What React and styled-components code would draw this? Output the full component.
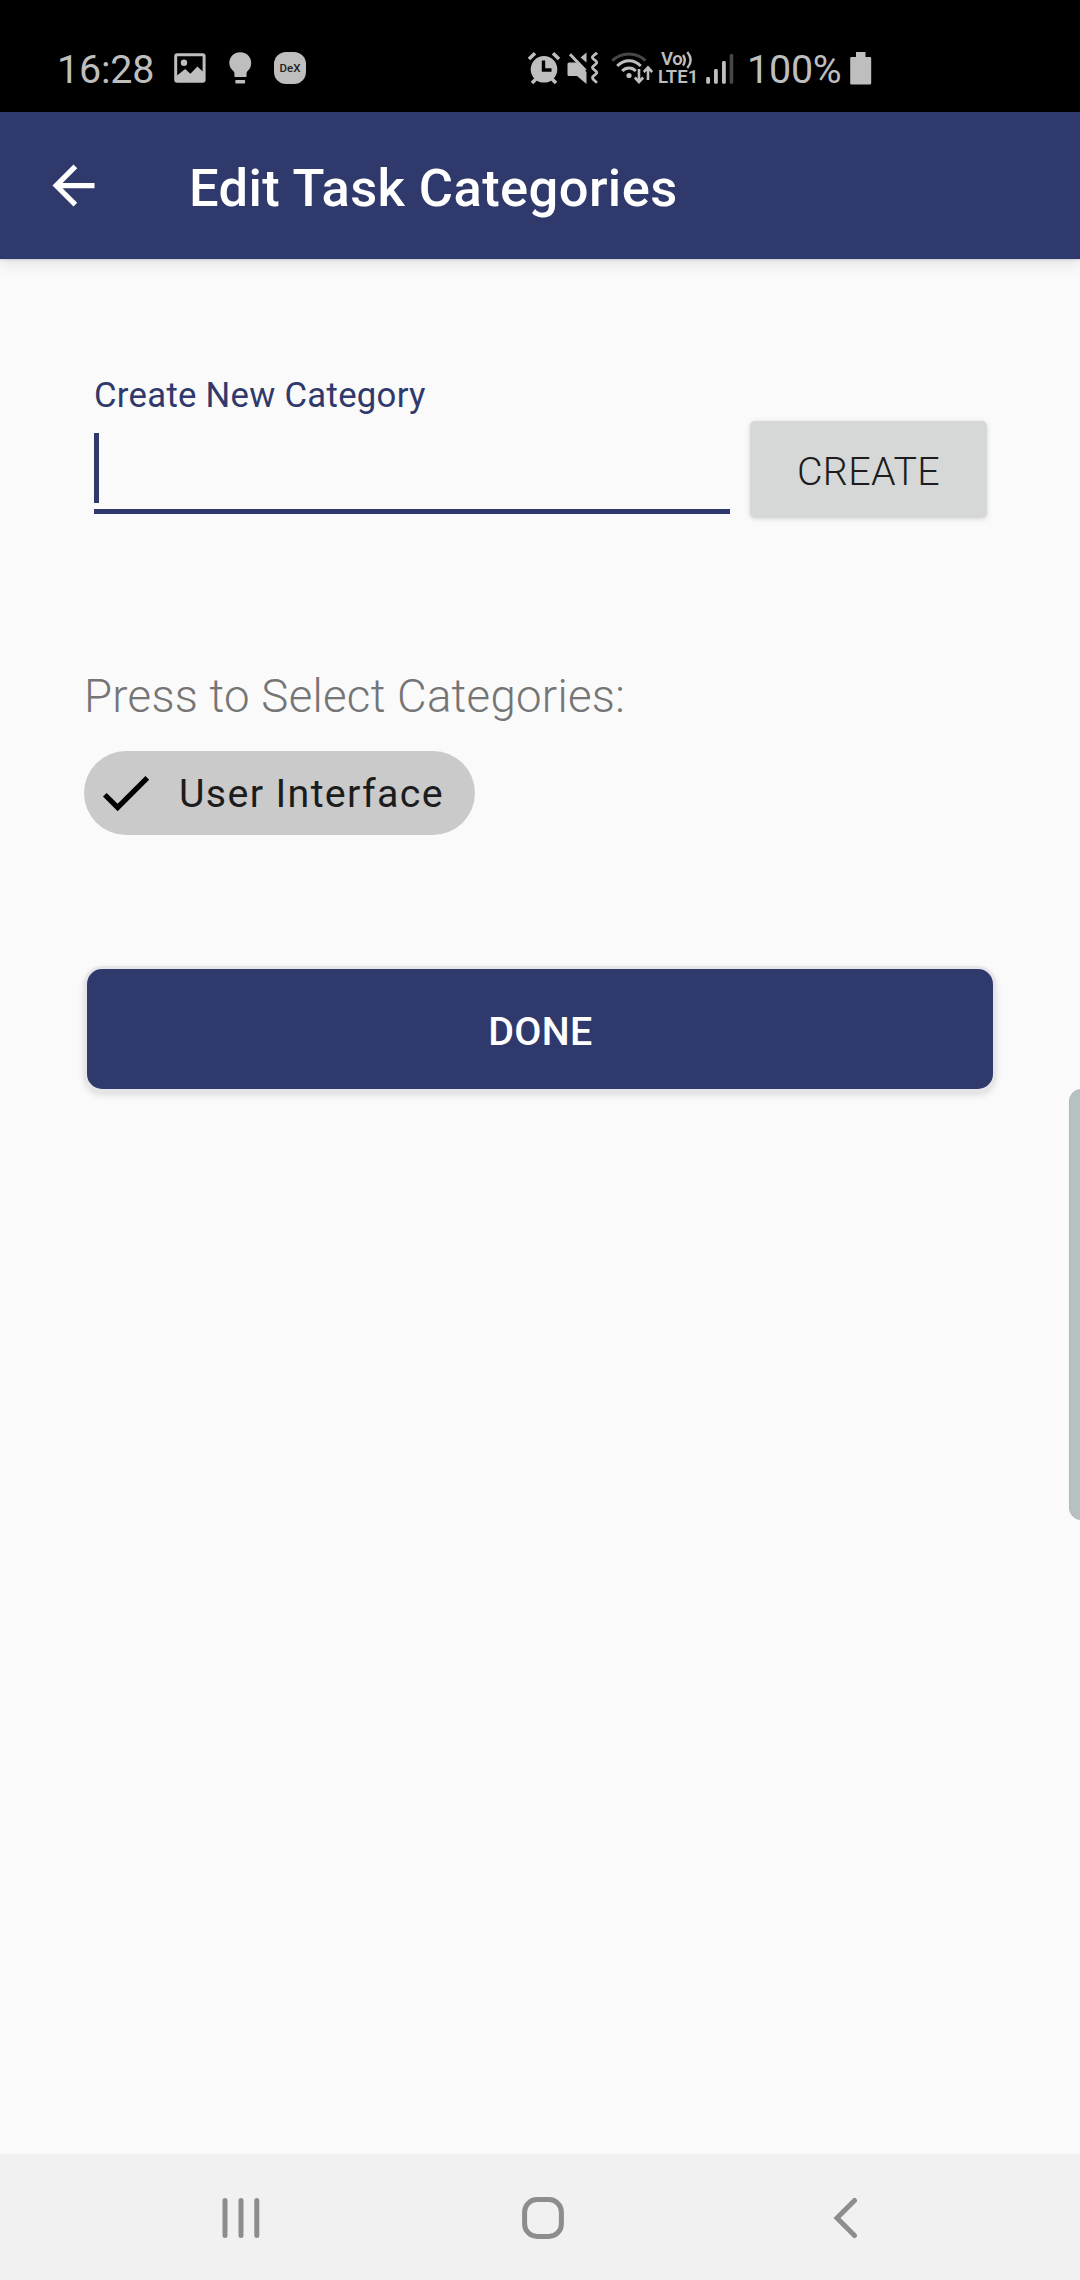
import React from 'react';
import styled, { createGlobalStyle } from 'styled-components';

const navy = '#30396b';
const statusGrey = '#bebebe';
const navGrey = '#8d8d8d';

const GlobalStyle = createGlobalStyle`
  * { box-sizing: border-box; }
  body { margin: 0; background: #fafafa; font-family: Roboto, "Noto Sans", sans-serif; }
`;

const Screen = styled.div`
  position: relative;
  display: flex;
  flex-direction: column;
  width: 1080px;
  height: 2280px;
  overflow: hidden;
  background: #fafafa;
`;

const StatusBar = styled.div`
  display: flex;
  justify-content: space-between;
  height: 112px;
  flex: none;
  padding: 24px 208px 0 57px;
  background: #000;
  color: ${statusGrey};
`;

const StatusGroup = styled.div`
  display: flex;
  align-items: center;
  height: 88px;
`;

const StatusText = styled.span`
  width: ${(p) => p.$width}px;
  margin-left: ${(p) => p.$gap || 0}px;
  padding-top: 3px;
  font-size: 39.4px;
  line-height: 46px;
  letter-spacing: -0.2px;
  white-space: nowrap;
`;

const Icon = styled.svg`
  display: block;
  flex: none;
  width: ${(p) => p.$w}px;
  height: ${(p) => p.$h}px;
  margin-left: ${(p) => p.$gap || 0}px;
`;

const DexBadge = styled.span`
  display: flex;
  align-items: center;
  justify-content: center;
  width: 32px;
  height: 32px;
  margin-left: 22px;
  border-radius: 12px;
  background: ${statusGrey};
  color: #222;
  font-size: 11.5px;
  font-weight: 500;
  line-height: 12px;
`;

const Volte = styled.span`
  display: flex;
  flex-direction: column;
  width: 40px;
  margin-left: 5px;
  font-size: 18.5px;
  font-weight: 600;
  line-height: 17px;
  white-space: nowrap;
`;

const VolteTop = styled.span`
  display: flex;
  align-items: center;
  height: 17px;
  padding-left: 3px;
  letter-spacing: -0.3px;
`;

const VolteBottom = styled.span`
  height: 17px;
  line-height: 18px;
`;

const AppBar = styled.header`
  position: relative;
  display: flex;
  align-items: center;
  flex: none;
  height: 147px;
  padding-left: 42px;
  background: ${navy};
  color: #fff;
  box-shadow: 0 1px 2px rgba(48, 57, 107, 0.16), 0 4px 16px rgba(0, 0, 0, 0.11);
`;

const Title = styled.h1`
  margin: 5px 0 0 84px;
  font-size: 52.5px;
  font-weight: 500;
  line-height: 62px;
  letter-spacing: 0.4px;
`;

const Content = styled.main`
  display: flex;
  flex-direction: column;
  flex: 1;
  padding: 116px 84px 0;
`;

const CreateRow = styled.div`
  display: flex;
  align-items: flex-start;
  gap: 20px;
  padding-left: 10px;
  height: 143px;
`;

const Field = styled.label`
  display: flex;
  flex-direction: column;
  width: 636px;
  height: 139px;
  border-bottom: 5px solid ${navy};
`;

const FieldLabel = styled.span`
  font-size: 34.7px;
  line-height: 40px;
  letter-spacing: 0.28px;
  color: ${navy};
`;

const Caret = styled.span`
  width: 5px;
  height: 70px;
  margin-top: 18px;
  background: ${navy};
`;

const CreateButton = styled.button`
  width: 237px;
  height: 97px;
  margin-top: 46px;
  padding: 5px 0 0;
  border: 0;
  border-radius: 5px;
  background: #d6d8d7;
  color: #1d1d1d;
  font: 300 39.4px/46px Roboto, sans-serif;
  letter-spacing: 0.35px;
  box-shadow: 0 1px 5px rgba(0, 0, 0, 0.15);
`;

const Prompt = styled.p`
  margin: 151px 0 0;
  font-size: 45.6px;
  font-weight: 300;
  line-height: 56px;
  letter-spacing: 0.28px;
  color: #757575;
`;

const Chip = styled.div`
  display: flex;
  align-items: center;
  align-self: flex-start;
  width: 391px;
  height: 84px;
  margin-top: 26px;
  padding-left: 10px;
  border-radius: 42px;
  background: #cacaca;
`;

const ChipText = styled.span`
  margin-left: 22px;
  padding-top: 2px;
  font-size: 39.4px;
  line-height: 46px;
  letter-spacing: 1.33px;
  white-space: nowrap;
  color: #1c1c1c;
`;

const DoneButton = styled.button`
  width: 912px;
  height: 126px;
  margin-top: 131px;
  padding: 6px 0 0 1px;
  border: 3px solid #e6e5ea;
  border-radius: 18px;
  background: ${navy};
  color: #fff;
  font: 500 39.4px/46px Roboto, sans-serif;
  letter-spacing: 0.3px;
  box-shadow: 0 3px 6px rgba(0, 0, 0, 0.12);
`;

const EdgeHandle = styled.div`
  position: absolute;
  left: 1069px;
  top: 1089px;
  width: 24px;
  height: 431px;
  border: 1px solid #b3b8b8;
  border-radius: 14px;
  background: #b8c1c2;
`;

const NavBar = styled.nav`
  display: flex;
  align-items: center;
  flex: none;
  height: 126px;
  padding: 2px 0 0 222px;
  background: #f1f1f1;
`;

export default function App() {
  return (
    <Screen>
      <GlobalStyle />
      <StatusBar>
        <StatusGroup>
          <StatusText $width={117}>16:28</StatusText>
          <Icon $w={32} $h={32} viewBox="0 0 32 32">
            <rect x="1.7" y="2.7" width="28.4" height="26.6" rx="1.5" fill="none" stroke={statusGrey} strokeWidth="3" />
            <circle cx="10" cy="10.7" r="3.2" fill={statusGrey} />
            <path d="M3 23.5 11.2 17l5.2 4.8 7-7.2 5.6 5.2V29H3z" fill={statusGrey} />
          </Icon>
          <Icon $w={23} $h={32} $gap={23} viewBox="0 0 23 32">
            <path
              d="M11.2 0.3C5 .3.3 5 .3 11c0 4 2.2 6.6 4.3 8.3C5.3 20 5.5 21 5.5 25h12c0-4 .2-5 .9-5.7 2.1-1.7 3.8-4.3 3.8-8.3 0-6-4.7-10.7-11-10.7z"
              fill={statusGrey}
            />
            <rect x="6.3" y="28" width="9.8" height="3.5" rx="0.8" fill={statusGrey} />
          </Icon>
          <DexBadge>DeX</DexBadge>
        </StatusGroup>
        <StatusGroup>
          <Icon $w={34} $h={34} viewBox="0 0 34 34">
            <circle cx="17" cy="18.3" r="13.3" fill={statusGrey} />
            <path d="M2 8 8 2.2M26 2.2 32 8M5 32l4-4M29 32l-4-4" stroke={statusGrey} strokeWidth="3.6" />
            <path d="M16.5 9.5v9.5h8" fill="none" stroke="#000" strokeWidth="3.4" />
          </Icon>
          <Icon $w={32} $h={34} $gap={6} viewBox="0 0 32 34">
            <path d="M0.5 13Q.5 11.5 2 11.5h7L19.500 21v12L10 25H2Q.5 25 .5 23.5z" fill={statusGrey} />
            <path d="M3 3.2 18.500 19.500" stroke={statusGrey} strokeWidth="3" />
            <path d="M19.5 1.5v10l-6-5z" fill={statusGrey} />
            <path
              d="M30 1.800c-1.800 2-4.600 3-4.600 4.800s4.400 3 4.400 5-4.400 3-4.400 5 4.400 3 4.400 5-4.400 3-4.400 5 2.800 3.400 4.600 5.200"
              fill="none"
              stroke={statusGrey}
              strokeWidth="2.8"
            />
          </Icon>
          <Icon $w={42} $h={34} $gap={12} viewBox="0 0 42 34">
            <path d="M1.200 9.700C11 .7 25 .7 34.500 9.700" fill="none" stroke="#474747" strokeWidth="3" />
            <path d="M6.200 15C13 8 23 8 29.800 15" fill="none" stroke={statusGrey} strokeWidth="3" />
            <path d="M11.200 20C15 16 21 16 24.800 20" fill="none" stroke={statusGrey} strokeWidth="3" />
            <circle cx="18" cy="24.5" r="2.6" fill={statusGrey} />
            <path
              d="M28 18v12.500M23.800 26.500 28 31l4.200-4.500M37 29V17M32.800 21 37 16.500l4.200 4.500"
              fill="none"
              stroke={statusGrey}
              strokeWidth="2.6"
            />
          </Icon>
          <Volte>
            <VolteTop>
              Vo
              <Icon $w={12} $h={18} viewBox="0 0 12 18">
                <path d="M1 4q3.600 5 0 10.500M5.300 1q6.700 8 0 16" fill="none" stroke={statusGrey} strokeWidth="2.4" />
              </Icon>
            </VolteTop>
            <VolteBottom>LTE1</VolteBottom>
          </Volte>
          <Icon $w={28} $h={32} $gap={8} viewBox="0 0 28 32">
            <rect x="0.2" y="25" width="3.8" height="6.8" rx="1.4" fill={statusGrey} />
            <rect x="8" y="17" width="3.8" height="14.8" rx="1.4" fill={statusGrey} />
            <rect x="16" y="9" width="3.8" height="22.8" rx="1.4" fill={statusGrey} />
            <rect x="23.7" y="2" width="3.6" height="29.8" rx="1.4" fill="#474747" />
          </Icon>
          <StatusText $gap={13} $width={95}>100%</StatusText>
          <Icon $w={22} $h={34} $gap={8} viewBox="0 0 22 34">
            <path d="M6 1h9.5v5H20q1.2 0 1.2 1.2v25Q21.2 33.5 20 33.5H1.4Q.2 33.5.2 32.2v-25Q.2 6 1.4 6H6z" fill={statusGrey} />
          </Icon>
        </StatusGroup>
      </StatusBar>

      <AppBar>
        <Icon $w={63} $h={63} viewBox="0 0 24 24">
          <path d="M20 11H7.83l5.59-5.59L12 4l-8 8 8 8 1.41-1.41L7.83 13H20z" fill="#fff" />
        </Icon>
        <Title>Edit Task Categories</Title>
      </AppBar>

      <Content>
        <CreateRow>
          <Field>
            <FieldLabel>Create New Category</FieldLabel>
            <Caret />
          </Field>
          <CreateButton>CREATE</CreateButton>
        </CreateRow>
        <Prompt>Press to Select Categories:</Prompt>
        <Chip>
          <Icon $w={63} $h={63} viewBox="0 0 24 24">
            <path d="M9 15.95 4.83 11.78l-1.42 1.41L9 18.78 21 6.78l-1.41-1.41z" fill="#000" />
          </Icon>
          <ChipText>User Interface</ChipText>
        </Chip>
        <DoneButton>DONE</DoneButton>
      </Content>

      <EdgeHandle />

      <NavBar>
        <Icon $w={38} $h={42} viewBox="0 0 38 42">
          <path d="M3 3.5v35M19 3.5v35M34.8 3.5v35" stroke={navGrey} strokeWidth="5" strokeLinecap="round" />
        </Icon>
        <Icon $w={42} $h={42} $gap={262} viewBox="0 0 42 42">
          <rect x="2.6" y="2.6" width="36.8" height="36.8" rx="12.5" fill="none" stroke={navGrey} strokeWidth="5" />
        </Icon>
        <Icon $w={26} $h={42} $gap={269} viewBox="0 0 26 42">
          <path d="M21.5 3.5 4 21l17.5 17.5" fill="none" stroke={navGrey} strokeWidth="5" strokeLinecap="round" />
        </Icon>
      </NavBar>
    </Screen>
  );
}
